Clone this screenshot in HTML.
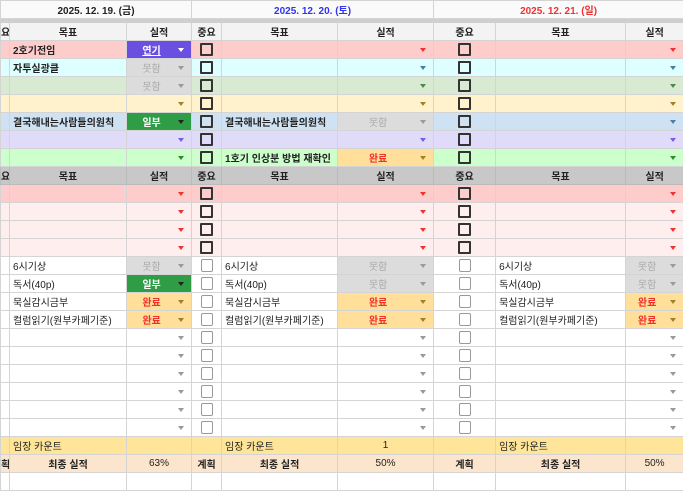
<!DOCTYPE html>
<html><head><meta charset="utf-8"><style>
body{margin:0;width:683px;height:476px;overflow:hidden;background:#fff;font-family:"Liberation Sans","Noto Sans CJK KR",sans-serif}
table{border-collapse:collapse;table-layout:fixed;width:683px}
td{border:1px solid #d4d4d4;padding:0 3px;font-size:10px;height:17px;overflow:hidden;white-space:nowrap;position:relative;color:#222}
tr.hd td{background:#fafafa;font-weight:bold;text-align:center;font-size:10px}
tr.gap td{height:3px;background:#cfcfcf;border-color:#cfcfcf;padding:0}
tr.h1 td{background:#f3f3f3;font-weight:bold;text-align:center}
tr.h2 td{background:#c8c8c8;font-weight:bold;text-align:center;border-color:#bbb}
td.c0{text-align:right!important;padding:0}
.b{font-weight:bold}
i{position:absolute;right:7px;top:7px;width:0;height:0;border-left:3.5px solid transparent;border-right:3.5px solid transparent;border-top:4px solid #999}
.k{display:block;width:9px;height:9px;border:2px solid #333;margin:0 auto;border-radius:1px}
.k2{display:block;width:10px;height:11px;border:1px solid #999;margin:0 auto;border-radius:2px}
.ch{text-align:center;padding-right:18px;font-weight:bold}
.yon{background:#6a4fe0!important;color:#fff;text-decoration:underline}
.mot{background:#dcdcdc!important;color:#aaa;font-weight:normal}
.ilb{background:#2f9d46!important;color:#fff}
.wan{background:#ffdf99!important;color:#f0302a}
.pk td{background:#fcc}.cy td{background:#dff}.gr td{background:#d9ead3}.ye td{background:#fff2cc}.bl td{background:#cfe2f3}.lv td{background:#e1dbfa}.lg td{background:#cfc}.lp td{background:#fee}
.im td{background:#ffe599}.fin td{background:#fce5cd}
</style></head><body>
<table>
<colgroup><col style="width:9px"><col style="width:117px"><col style="width:65px"><col style="width:30px"><col style="width:116px"><col style="width:96px"><col style="width:62px"><col style="width:130px"><col style="width:58px"></colgroup>
<tr class="hd"><td colspan="3">2025. 12. 19. (금)</td><td colspan="3" style="color:#3333ee">2025. 12. 20. (토)</td><td colspan="3" style="color:#ee3333">2025. 12. 21. (일)</td></tr>
<tr class="gap"><td></td><td></td><td></td><td></td><td></td><td></td><td></td><td></td><td></td></tr>
<tr class="h1"><td class="c0">요</td><td>목표</td><td>실적</td><td>중요</td><td>목표</td><td>실적</td><td>중요</td><td>목표</td><td>실적</td></tr>
<tr class="pk b"><td></td><td class="b">2호기전임</td><td class="ch yon">연기<i style="border-top-color:#fff"></i></td><td><b class="k"></b></td><td></td><td><i style="border-top-color:#e33"></i></td><td><b class="k"></b></td><td></td><td><i style="border-top-color:#e33"></i></td></tr>
<tr class="cy"><td></td><td class="b">자투실광클</td><td class="ch mot">못함<i style="border-top-color:#999"></i></td><td><b class="k"></b></td><td></td><td><i style="border-top-color:#4a7fa0"></i></td><td><b class="k"></b></td><td></td><td><i style="border-top-color:#4a7fa0"></i></td></tr>
<tr class="gr"><td></td><td></td><td class="ch mot">못함<i style="border-top-color:#999"></i></td><td><b class="k"></b></td><td></td><td><i style="border-top-color:#4c8a4c"></i></td><td><b class="k"></b></td><td></td><td><i style="border-top-color:#4c8a4c"></i></td></tr>
<tr class="ye"><td></td><td></td><td><i style="border-top-color:#a0812a"></i></td><td><b class="k"></b></td><td></td><td><i style="border-top-color:#a0812a"></i></td><td><b class="k"></b></td><td></td><td><i style="border-top-color:#a0812a"></i></td></tr>
<tr class="bl"><td></td><td class="b">결국해내는사람들의원칙</td><td class="ch ilb">일부<i style="border-top-color:#222"></i></td><td><b class="k"></b></td><td class="b">결국해내는사람들의원칙</td><td class="ch mot">못함<i style="border-top-color:#999"></i></td><td><b class="k"></b></td><td></td><td><i style="border-top-color:#4a7fa0"></i></td></tr>
<tr class="lv"><td></td><td></td><td><i style="border-top-color:#7b5ce0"></i></td><td><b class="k"></b></td><td></td><td><i style="border-top-color:#7b5ce0"></i></td><td><b class="k"></b></td><td></td><td><i style="border-top-color:#7b5ce0"></i></td></tr>
<tr class="lg"><td></td><td></td><td><i style="border-top-color:#2e8b2e"></i></td><td><b class="k"></b></td><td class="b">1호기 인상분 방법 재확인</td><td class="ch wan">완료<i style="border-top-color:#a0812a"></i></td><td><b class="k"></b></td><td></td><td><i style="border-top-color:#2e8b2e"></i></td></tr>
<tr class="h2"><td class="c0">요</td><td>목표</td><td>실적</td><td>중요</td><td>목표</td><td>실적</td><td>중요</td><td>목표</td><td>실적</td></tr>
<tr class="pk"><td></td><td></td><td><i style="border-top-color:#e33"></i></td><td><b class="k"></b></td><td></td><td><i style="border-top-color:#e33"></i></td><td><b class="k"></b></td><td></td><td><i style="border-top-color:#e33"></i></td></tr>
<tr class="lp"><td></td><td></td><td><i style="border-top-color:#e33"></i></td><td><b class="k"></b></td><td></td><td><i style="border-top-color:#e33"></i></td><td><b class="k"></b></td><td></td><td><i style="border-top-color:#e33"></i></td></tr>
<tr class="lp"><td></td><td></td><td><i style="border-top-color:#e33"></i></td><td><b class="k"></b></td><td></td><td><i style="border-top-color:#e33"></i></td><td><b class="k"></b></td><td></td><td><i style="border-top-color:#e33"></i></td></tr>
<tr class="lp"><td></td><td></td><td><i style="border-top-color:#e33"></i></td><td><b class="k"></b></td><td></td><td><i style="border-top-color:#e33"></i></td><td><b class="k"></b></td><td></td><td><i style="border-top-color:#e33"></i></td></tr>
<tr><td></td><td>6시기상</td><td class="ch mot">못함<i></i></td><td><b class="k2"></b></td><td>6시기상</td><td class="ch mot">못함<i></i></td><td><b class="k2"></b></td><td>6시기상</td><td class="ch mot">못함<i></i></td></tr>
<tr><td></td><td>독서(40p)</td><td class="ch ilb">일부<i style="border-top-color:#222"></i></td><td><b class="k2"></b></td><td>독서(40p)</td><td class="ch mot">못함<i></i></td><td><b class="k2"></b></td><td>독서(40p)</td><td class="ch mot">못함<i></i></td></tr>
<tr><td></td><td>묵실감시금부</td><td class="ch wan">완료<i style="border-top-color:#a0812a"></i></td><td><b class="k2"></b></td><td>묵실감시금부</td><td class="ch wan">완료<i style="border-top-color:#a0812a"></i></td><td><b class="k2"></b></td><td>묵실감시금부</td><td class="ch wan">완료<i style="border-top-color:#a0812a"></i></td></tr>
<tr><td></td><td>컬럼읽기(원부카페기준)</td><td class="ch wan">완료<i style="border-top-color:#a0812a"></i></td><td><b class="k2"></b></td><td>컬럼읽기(원부카페기준)</td><td class="ch wan">완료<i style="border-top-color:#a0812a"></i></td><td><b class="k2"></b></td><td>컬럼읽기(원부카페기준)</td><td class="ch wan">완료<i style="border-top-color:#a0812a"></i></td></tr>
<tr><td></td><td></td><td><i></i></td><td><b class="k2"></b></td><td></td><td><i></i></td><td><b class="k2"></b></td><td></td><td><i></i></td></tr>
<tr><td></td><td></td><td><i></i></td><td><b class="k2"></b></td><td></td><td><i></i></td><td><b class="k2"></b></td><td></td><td><i></i></td></tr>
<tr><td></td><td></td><td><i></i></td><td><b class="k2"></b></td><td></td><td><i></i></td><td><b class="k2"></b></td><td></td><td><i></i></td></tr>
<tr><td></td><td></td><td><i></i></td><td><b class="k2"></b></td><td></td><td><i></i></td><td><b class="k2"></b></td><td></td><td><i></i></td></tr>
<tr><td></td><td></td><td><i></i></td><td><b class="k2"></b></td><td></td><td><i></i></td><td><b class="k2"></b></td><td></td><td><i></i></td></tr>
<tr><td></td><td></td><td><i></i></td><td><b class="k2"></b></td><td></td><td><i></i></td><td><b class="k2"></b></td><td></td><td><i></i></td></tr>
<tr class="im"><td></td><td>임장 카운트</td><td></td><td></td><td>임장 카운트</td><td style="text-align:center">1</td><td></td><td>임장 카운트</td><td></td></tr>
<tr class="fin"><td class="c0 b">획</td><td class="b" style="text-align:center">최종 실적</td><td style="text-align:center">63%</td><td class="b" style="text-align:center">계획</td><td class="b" style="text-align:center">최종 실적</td><td style="text-align:center">50%</td><td class="b" style="text-align:center">계획</td><td class="b" style="text-align:center">최종 실적</td><td style="text-align:center">50%</td></tr>
<tr><td></td><td></td><td></td><td></td><td></td><td></td><td></td><td></td><td></td></tr>
</table>
</body></html>
